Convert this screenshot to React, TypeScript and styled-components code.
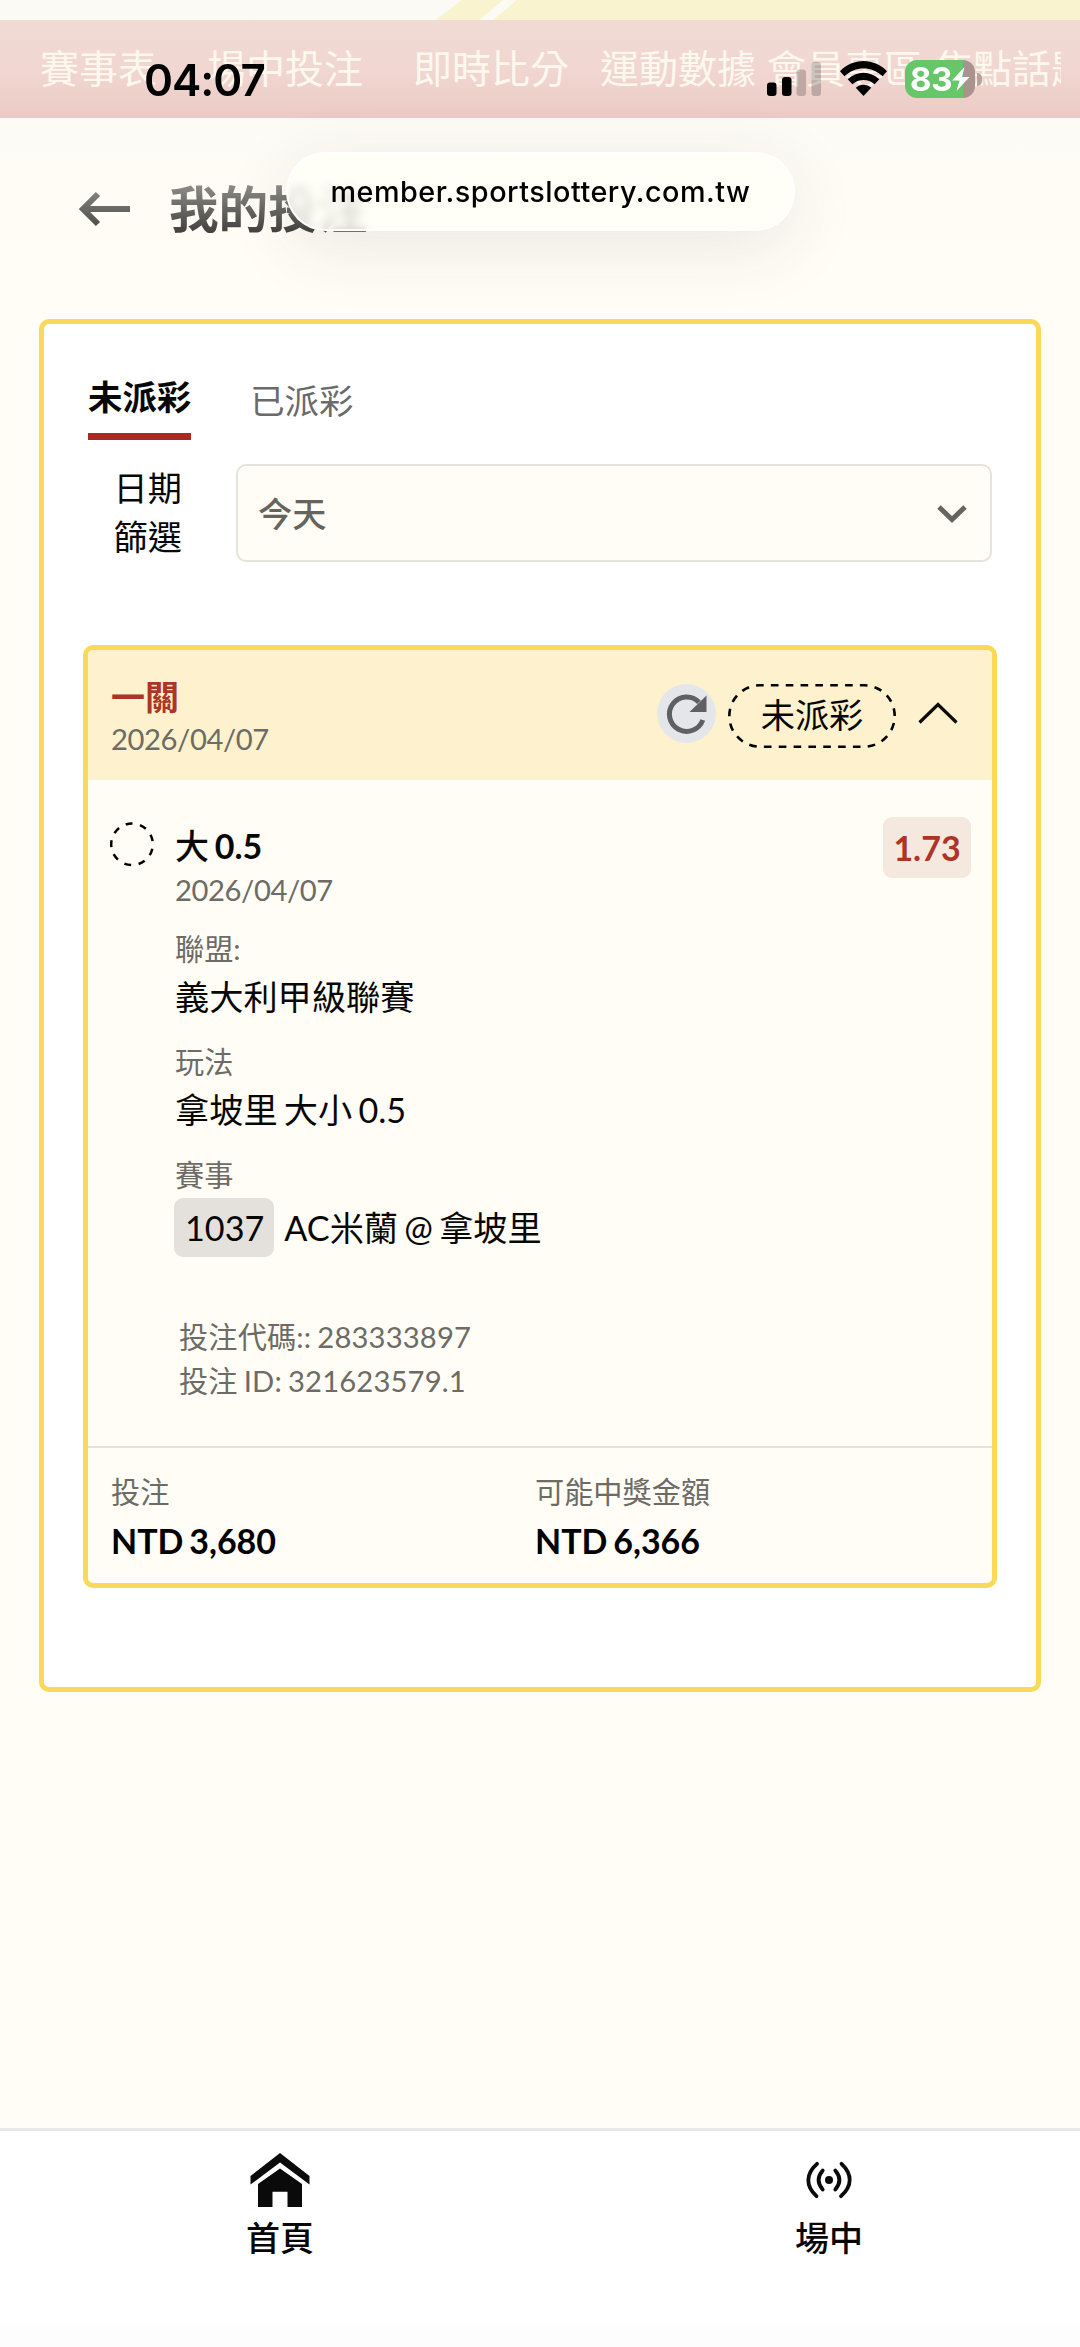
import React from 'react';
import styled, { createGlobalStyle } from 'styled-components';

const GlobalStyle = createGlobalStyle`
  * { box-sizing: border-box; }
  body {
    margin: 0;
    background: #fffdf5;
    color: #070707;
    font-family: Lato, "Noto Sans CJK TC", sans-serif;
  }
`;

const Page = styled.div`
  position: relative;
  display: flex;
  flex-direction: column;
  width: 1080px;
  height: 2347px;
  overflow: hidden;
  background: linear-gradient(#fbfaf5 0, #fdfbf5 118px, #fffdf5 260px);
`;

/* Top of page */

const Banner = styled.div`
  height: 20px;
  flex: none;
  svg { display: block; }
`;

const SiteNav = styled.nav`
  flex: none;
  display: flex;
  height: 98px;
  margin-bottom: 48px;
  padding: 21px 19px 0 40px;
  background: linear-gradient(#f0dbd3, #f1d6d1 50%, #eed0ca 78%, #ecc9c4);
`;

const NavClip = styled.div`
  display: flex;
  width: 1021px;
  overflow: hidden;
`;

const NavItem = styled.a<{ $gap: number }>`
  flex: none;
  margin-right: ${(p) => p.$gap}px;
  font-size: 39px;
  font-weight: 400;
  line-height: 54px;
  color: #fdf8ee;
`;

const TitleBar = styled.header`
  flex: none;
  display: flex;
  align-items: center;
  height: 87px;
  padding-left: 77px;
  gap: 38px;
`;

const Title = styled.h1`
  margin: 0;
  position: relative;
  top: -1px;
  font-size: 49.6px;
  line-height: 70px;
  font-weight: 700;
  color: transparent;
  background: linear-gradient(#8b8a86 12px, #403f3d 60px);
  background-clip: text;
  -webkit-background-clip: text;
`;

/* System overlays */

const StatusBar = styled.div`
  position: absolute;
  inset: 0 0 auto 0;
  height: 110px;
  display: flex;
  justify-content: space-between;
  align-items: flex-start;
  padding: 0 98px 0 144px;
  font-family: Inter, sans-serif;
`;

const Clock = styled.div`
  margin-top: 53px;
  font-size: 44px;
  line-height: 54px;
  font-weight: 600;
  letter-spacing: -1px;
  color: #000;
`;

const Indicators = styled.div`
  display: flex;
  align-items: flex-start;
  margin-top: 60px;
`;

const Signal = styled.svg`
  display: block;
  margin: 2px 19px 0 0;
`;

const Wifi = styled.svg`
  display: block;
  margin: 1px 18px 0 0;
`;

const Battery = styled.div`
  position: relative;
  display: flex;
  align-items: center;
  width: 70px;
  height: 38px;
  padding-left: 5px;
  border-radius: 12px;
  background: linear-gradient(90deg, #67c66a 58px, #a8938e 58px);
  color: #fff;
  font-size: 33px;
  font-weight: 700;
  letter-spacing: -0.3px;
  svg { display: block; }
`;

const BatteryCap = styled.span`
  width: 5px;
  height: 13px;
  margin: 13px 0 0 2px;
  border-radius: 0 6px 6px 0;
  background: #b9a19c;
`;

const AddressPill = styled.div`
  position: absolute;
  left: 286px;
  top: 152px;
  display: flex;
  align-items: center;
  justify-content: center;
  width: 509px;
  height: 79px;
  border: 2px solid rgba(255, 255, 255, 0.9);
  border-radius: 40px;
  background: rgba(255, 255, 248, 0.8);
  backdrop-filter: blur(5px);
  box-shadow: 0 16px 70px rgba(50, 50, 40, 0.1);
  color: #000;
  font-family: Inter, sans-serif;
  font-size: 28.8px;
  font-weight: 500;
  letter-spacing: 0.5px;
`;

/* Bets panel */

const Panel = styled.main`
  flex: none;
  display: flex;
  flex-direction: column;
  width: 1002px;
  height: 1372.5px;
  margin: 66px 0 0 39px;
  padding: 48px 39px 0;
  border: 5px solid #f9d957;
  border-radius: 10px;
  background: #fff;
`;

const Tabs = styled.div`
  display: flex;
  gap: 59px;
  height: 92px;
  padding-left: 5px;
`;

const Tab = styled.button<{ $active?: boolean }>`
  height: 68px;
  padding: ${(p) => (p.$active ? '0' : '4px')} 0 0;
  border: 0;
  border-bottom: ${(p) => (p.$active ? '7.5px solid #ad2822' : '0')};
  background: none;
  font-family: inherit;
  font-size: 34.4px;
  line-height: 49px;
  font-weight: ${(p) => (p.$active ? 700 : 400)};
  color: ${(p) => (p.$active ? '#070707' : '#6a6a6a')};
  display: flex;
  align-items: flex-start;
`;

const Filter = styled.div`
  display: flex;
  height: 98px;
  padding-right: 5px;
`;

const FilterLabel = styled.label`
  width: 153px;
  padding: 0 54px 0 30px;
  margin-top: -1px;
  font-size: 34.2px;
  line-height: 49px;
  text-align: right;
`;

const Select = styled.div`
  flex: 1;
  display: flex;
  align-items: center;
  justify-content: space-between;
  padding: 0 21px 0 20px;
  border: 2px solid #e6e3dc;
  border-radius: 10px;
  background: #fffdf5;
  font-size: 34.2px;
  font-weight: 500;
  color: #65645f;
  span { padding-bottom: 3px; }
`;

/* Ticket */

const Ticket = styled.article`
  display: flex;
  flex-direction: column;
  height: 943px;
  margin-top: 83px;
  border: 5px solid #f9d957;
  border-radius: 10px;
  background: #fffdf5;
  overflow: hidden;
`;

const TicketHead = styled.header`
  flex: none;
  display: flex;
  align-items: flex-start;
  justify-content: space-between;
  height: 130px;
  padding: 25px 34px 0 23px;
  background: #fdf2cd;
`;

const Parlay = styled.div`
  font-size: 34px;
  line-height: 43px;
  font-weight: 700;
  color: #ad3527;
`;

const Muted = styled.div`
  font-size: 29.2px;
  line-height: 44px;
  word-spacing: -1.5px;
  color: #6c6b66;
`;

const DateText = styled(Muted)`
  position: relative;
  top: -1px;
  letter-spacing: -0.4px;
`;

const HeadActions = styled.div`
  display: flex;
  align-items: center;
  height: 64px;
  margin-top: 9px;
`;

const RefreshButton = styled.button`
  display: grid;
  place-items: center;
  width: 59px;
  height: 59px;
  margin: 0 12px 5px 0;
  padding: 0;
  border: 0;
  border-radius: 50%;
  background: #e5e6e9;
`;

const StatusPill = styled.div`
  position: relative;
  width: 168px;
  height: 64px;
  margin-right: 22px;
  font-size: 34.2px;
  line-height: 62px;
  text-align: center;
`;

const DashedOutline = styled.svg`
  position: absolute;
  inset: 0;
`;

const Caret = styled.svg`
  display: block;
  margin-bottom: 4px;
`;

const Selection = styled.section`
  flex: none;
  display: grid;
  grid-template-columns: 65px 1fr auto;
  align-items: start;
  height: 666px;
  padding: 45px 21px 0 22px;
`;

const Ring = styled.svg`
  display: block;
  margin-top: -3px;
`;

const Pick = styled.div`
  position: relative;
  top: -1px;
  font-size: 34px;
  line-height: 44px;
  font-weight: 700;
  word-spacing: -2.5px;
`;

const PickChar = styled.span`
  font-weight: 500;
`;

const Field = styled.div<{ $top: number }>`
  margin-top: ${(p) => p.$top}px;
`;

const Value = styled.div`
  display: flex;
  align-items: center;
  gap: 10px;
  font-size: 34.2px;
  line-height: 51px;
  word-spacing: -2.5px;
`;

const Chip = styled.span`
  height: 59px;
  padding: 0 10px 0 11px;
  margin: 1px 0 0 -1px;
  border-radius: 9px;
  background: #e4e1dc;
  line-height: 60px;
`;

const Codes = styled.div`
  margin: 58px 0 0 4px;
  letter-spacing: 0.15px;
`;

const Odds = styled.div`
  width: 88px;
  height: 61px;
  margin: -8px 0 0;
  border-radius: 9px;
  background: #f5e8df;
  font-size: 34px;
  line-height: 62px;
  font-weight: 700;
  text-align: center;
  color: #ad3527;
`;

const TicketFoot = styled.footer`
  flex: 1;
  display: grid;
  grid-template-columns: 424px 1fr;
  padding: 22px 23px 0;
  border-top: 2px solid #e4e1dc;
`;

const Money = styled.div`
  font-size: 34px;
  line-height: 53px;
  font-weight: 700;
  word-spacing: -2.5px;
  color: #000;
`;

/* Bottom navigation */

const BottomNav = styled.nav`
  flex: none;
  display: flex;
  justify-content: space-between;
  height: 219px;
  margin-top: auto;
  padding: 15px 217px 0 246px;
  border-top: 3px solid #e8e8e6;
  background: linear-gradient(#fff 185px, #fdfdfd 200px);
`;

const BottomItem = styled.a`
  display: flex;
  flex-direction: column;
  align-items: center;
  font-size: 34px;
  line-height: 50px;
  font-weight: 500;
`;

const IconSlot = styled.span`
  display: grid;
  place-items: center;
  width: 68px;
  height: 67px;
`;

const navItems = [
  { label: '賽事表', gap: 50 },
  { label: '場中投注', gap: 50 },
  { label: '即時比分', gap: 31 },
  { label: '運動數據', gap: 11 },
  { label: '會員專區', gap: 11 },
  { label: '焦點話題', gap: 0 },
];

export default function App() {
  return (
    <>
      <GlobalStyle />
      <Page>
        <Banner>
          <svg width="1080" height="20" fill="#f9f3cf">
            <path d="M435.5 20 461.5 0H503L479.5 20zM493 20 517 0H1080V20z" />
          </svg>
        </Banner>
        <SiteNav>
          <NavClip>
            {navItems.map((n) => (
              <NavItem key={n.label} $gap={n.gap}>{n.label}</NavItem>
            ))}
          </NavClip>
        </SiteNav>
        <TitleBar>
          <svg width="54" height="40" viewBox="0 0 54 40" fill="none" stroke="url(#fade)" strokeWidth="6">
            <defs>
              <linearGradient id="fade" gradientUnits="userSpaceOnUse" x1="0" y1="0" x2="0" y2="40">
                <stop offset="0" stopColor="#858480" />
                <stop offset="1" stopColor="#4a4946" />
              </linearGradient>
            </defs>
            <path d="M53 19.010H6M21 4 6 19 21 34" />
          </svg>
          <Title>我的投注</Title>
        </TitleBar>

        <Panel>
          <Tabs>
            <Tab $active>未派彩</Tab>
            <Tab>已派彩</Tab>
          </Tabs>
          <Filter>
            <FilterLabel>日期篩選</FilterLabel>
            <Select>
              <span>今天</span>
              <svg width="34" height="20" viewBox="0 0 34 20" fill="none" stroke="#65645f" strokeWidth="5">
                <path d="M4 4 17 16.500 30 4" />
              </svg>
            </Select>
          </Filter>

          <Ticket>
            <TicketHead>
              <div>
                <Parlay>一關</Parlay>
                <DateText>2026/04/07</DateText>
              </div>
              <HeadActions>
                <RefreshButton aria-label="refresh">
                  <svg width="59" height="59" viewBox="0 0 59 59">
                    <path d="M45.800 36A17.200 17.200 0 1 1 42 18.200" fill="none" stroke="#5f6062" strokeWidth="5" />
                    <path d="M49.500 11.500V28H32.500z" fill="#5f6062" />
                  </svg>
                </RefreshButton>
                <StatusPill>
                  未派彩
                  <DashedOutline width="168" height="64" viewBox="0 0 168 64" fill="none">
                    <rect x="1.300" y="1.300" width="165.400" height="61.400" rx="30.700" stroke="#000" strokeWidth="2.600" pathLength="405" strokeDasharray="7.700 7.300" strokeDashoffset="4" />
                  </DashedOutline>
                </StatusPill>
                <Caret width="40" height="24" viewBox="0 0 40 24" fill="none" stroke="#0c0c0c" strokeWidth="3.200">
                  <path d="M1.500 20.500 20 2.500 38.500 20.500" />
                </Caret>
              </HeadActions>
            </TicketHead>

            <Selection>
              <Ring width="44" height="45" viewBox="0 0 44 45" fill="none">
                <circle cx="22" cy="22.300" r="20.800" stroke="#000" strokeWidth="2.500" pathLength="360" strokeDasharray="19 21" transform="rotate(-107.500 22 22.300)" />
              </Ring>
              <div>
                <Pick><PickChar>大</PickChar> 0.5</Pick>
                <DateText>2026/04/07</DateText>
                <Field $top={14}>
                  <Muted>聯盟:</Muted>
                  <Value>義大利甲級聯賽</Value>
                </Field>
                <Field $top={18}>
                  <Muted>玩法</Muted>
                  <Value>拿坡里 大小 0.5</Value>
                </Field>
                <Field $top={18}>
                  <Muted>賽事</Muted>
                  <Value>
                    <Chip>1037</Chip>
                    AC米蘭 @ 拿坡里
                  </Value>
                </Field>
                <Codes>
                  <Muted>投注代碼:: 283333897</Muted>
                  <Muted>投注 ID: 321623579.1</Muted>
                </Codes>
              </div>
              <Odds>1.73</Odds>
            </Selection>

            <TicketFoot>
              <div>
                <Muted>投注</Muted>
                <Money>NTD 3,680</Money>
              </div>
              <div>
                <Muted>可能中獎金額</Muted>
                <Money>NTD 6,366</Money>
              </div>
            </TicketFoot>
          </Ticket>
        </Panel>

        <BottomNav>
          <BottomItem>
            <IconSlot>
              <svg width="60" height="54" viewBox="0 0 60 54" fill="#0a0a0a">
                <path d="M30 0 59.500 23V31.500L30 9.500.500 31.500V23z" />
                <path d="M30 15.500 52 31V54H37.500V38.700H22.500V54H8V31z" />
              </svg>
            </IconSlot>
            首頁
          </BottomItem>
          <BottomItem>
            <IconSlot>
              <svg width="46" height="38" viewBox="0 0 46 38" fill="none" stroke="#0a0a0a" strokeWidth="3.800" strokeLinecap="round">
                <circle cx="23" cy="19" r="4" fill="#0a0a0a" stroke="none" />
                <path d="M16.700 9.500Q8.500 19 16.700 28.500M29.300 9.500Q37.500 19 29.300 28.500" />
                <path d="M11 2.800C-.500 13-.500 25 10.500 35.200M35.500 2.800C46.500 13 46.500 25 35 35.200" />
              </svg>
            </IconSlot>
            場中
          </BottomItem>
        </BottomNav>

        <AddressPill>member.sportslottery.com.tw</AddressPill>
        <StatusBar>
          <Clock>04:07</Clock>
          <Indicators>
            <Signal width="54" height="34" viewBox="0 0 54 34">
              <rect x="0" y="20.500" width="9.500" height="13.500" rx="3" />
              <rect x="15" y="15" width="9.500" height="19" rx="3" />
              <rect x="29.500" y="7.500" width="9.500" height="26.500" rx="3" opacity=".2" />
              <rect x="44.500" y="0" width="9.500" height="34" rx="3" opacity=".2" />
            </Signal>
            <Wifi width="47" height="35" viewBox="0 0 47 35">
              <path d="M0 10.200C13-3.400 34-3.400 47 10.200L42.500 15.200C32 4.800 15 4.800 4.500 15.200z" />
              <path d="M7.700 18.300C16.500 9.600 30.500 9.600 39.300 18.300L34.600 23.300C28.500 17.400 18.500 17.400 12.400 23.300z" />
              <path d="M15.800 26.700C20 22.600 27 22.600 31.200 26.700L23.500 35z" />
            </Wifi>
            <Battery>
              83
              <svg width="18" height="26" viewBox="0 0 18 26" fill="#fff">
                <path d="M12.500 1 0 14.500H7.500L4.500 25 17.500 11H10z" />
              </svg>
            </Battery>
            <BatteryCap />
          </Indicators>
        </StatusBar>
      </Page>
    </>
  );
}
